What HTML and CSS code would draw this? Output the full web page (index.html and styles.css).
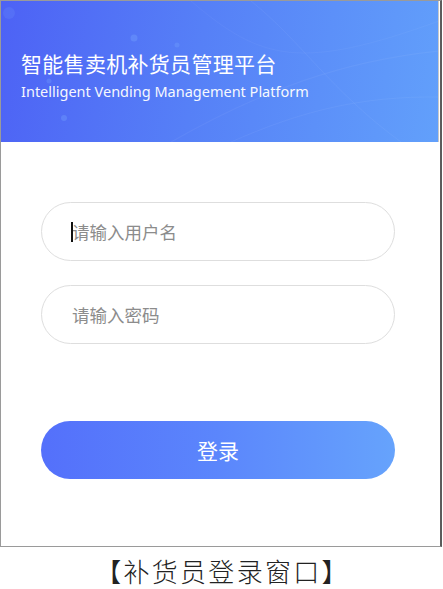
FILE: index.html
```html
<!DOCTYPE html>
<html lang="zh-CN">
<head>
    <meta charset="UTF-8">
    <meta name="viewport" content="width=device-width, initial-scale=1.0">
    <title>补货员登录</title>
    <link rel="stylesheet" href="styles.css">
</head>
<body>
    <div class="frame">
        <div class="header">
            <!-- faint light streaks on the banner -->
            <svg class="streaks" width="438" height="141" viewBox="0 0 438 141">
                <path d="M170 141 C260 90 340 60 438 50" fill="none" stroke="#ffffff" stroke-opacity="0.05" stroke-width="1.2"/>
                <path d="M230 141 C300 110 360 95 438 96" fill="none" stroke="#ffffff" stroke-opacity="0.05" stroke-width="1"/>
                <path d="M250 0 C300 40 330 90 400 141" fill="none" stroke="#ffffff" stroke-opacity="0.05" stroke-width="1"/>
                <path d="M190 0 C260 60 300 70 438 20" fill="none" stroke="#ffffff" stroke-opacity="0.04" stroke-width="1"/>
                <circle cx="133" cy="37" r="3.5" fill="#7fb0ff" fill-opacity="0.3"/>
                <circle cx="176" cy="44" r="2.5" fill="#7fb0ff" fill-opacity="0.25"/>
                <circle cx="48" cy="80" r="2.5" fill="#7fb0ff" fill-opacity="0.25"/>
                <circle cx="63" cy="117" r="3" fill="#7fb0ff" fill-opacity="0.3"/>
                <circle cx="8" cy="12" r="6" fill="#7fb0ff" fill-opacity="0.15"/>
            </svg>
            <h1 class="title">智能售卖机补货员管理平台</h1>
            <div class="subtitle">Intelligent Vending Management Platform</div>
        </div>

        <form class="login-form">
            <label class="field">
                <span class="caret"></span>
                <input type="text" placeholder="请输入用户名">
            </label>
            <label class="field">
                <input type="password" placeholder="请输入密码">
            </label>
            <button type="button" class="login-btn">登录</button>
        </form>
    </div>
    <div class="caption">【补货员登录窗口】</div>
</body>
</html>
```

FILE: styles.css
```css
body {
    margin: 0;
    background: #fff;
    font-family: "Noto Sans", "Noto Sans CJK SC", sans-serif;
}
.frame {
    box-sizing: border-box;
    width: 442px;
    height: 547px;
    border: 1px solid #9a9a9a;
    border-right: 2px solid #5c5c5c;
    background: #fff;
}
.header {
    position: relative;
    height: 141px;
    margin-right: 1px;
    padding: 48px 0 0 20px;
    box-sizing: border-box;
    border-right: 1px solid #c8c8c8;
    background: linear-gradient(100deg, #4d62f5 0%, #5680f7 45%, #62a0fb 100%);
    color: #fff;
    overflow: hidden;
}
.streaks {
    position: absolute;
    top: 0;
    left: 0;
}
.title {
    position: relative;
    margin: 0;
    font-family: "Noto Sans CJK SC", sans-serif;
    font-size: 21px;
    font-weight: normal;
    line-height: 28px;
    letter-spacing: 0.3px;
}
.subtitle {
    position: relative;
    margin-top: 4px;
    font-size: 14.5px;
    line-height: 20px;
    opacity: 0.95;
}
.login-form {
    width: 354px;
    margin: 60px 0 0 40px;
    display: flex;
    flex-direction: column;
}
.field {
    position: relative;
    display: block;
    margin-bottom: 24px;
}
.field input {
    box-sizing: border-box;
    width: 100%;
    height: 59px;
    padding: 0 20px 0 30px;
    border: 1px solid #dedede;
    border-radius: 30px;
    outline: none;
    font-family: "Noto Sans CJK SC", sans-serif;
    font-size: 17.5px;
    color: #333;
    background: #fff;
}
.field input::placeholder {
    color: #8c8c8c;
}
.caret {
    position: absolute;
    left: 30px;
    top: 20px;
    width: 2px;
    height: 20px;
    background: #111;
}
.login-btn {
    height: 58px;
    margin-top: 53px;
    border: none;
    border-radius: 29px;
    background: linear-gradient(90deg, #5470fb 0%, #5b86fc 50%, #66a3fc 100%);
    color: #fff;
    font-family: "Noto Sans CJK SC", sans-serif;
    font-size: 21px;
    cursor: pointer;
}
.caption {
    box-sizing: border-box;
    width: 443px;
    margin-top: 8px;
    padding-left: 2px;
    text-align: center;
    font-family: "Noto Sans CJK SC", serif;
    font-size: 26px;
    font-weight: 300;
    line-height: 32px;
    letter-spacing: 2.3px;
    color: #222;
}
```
